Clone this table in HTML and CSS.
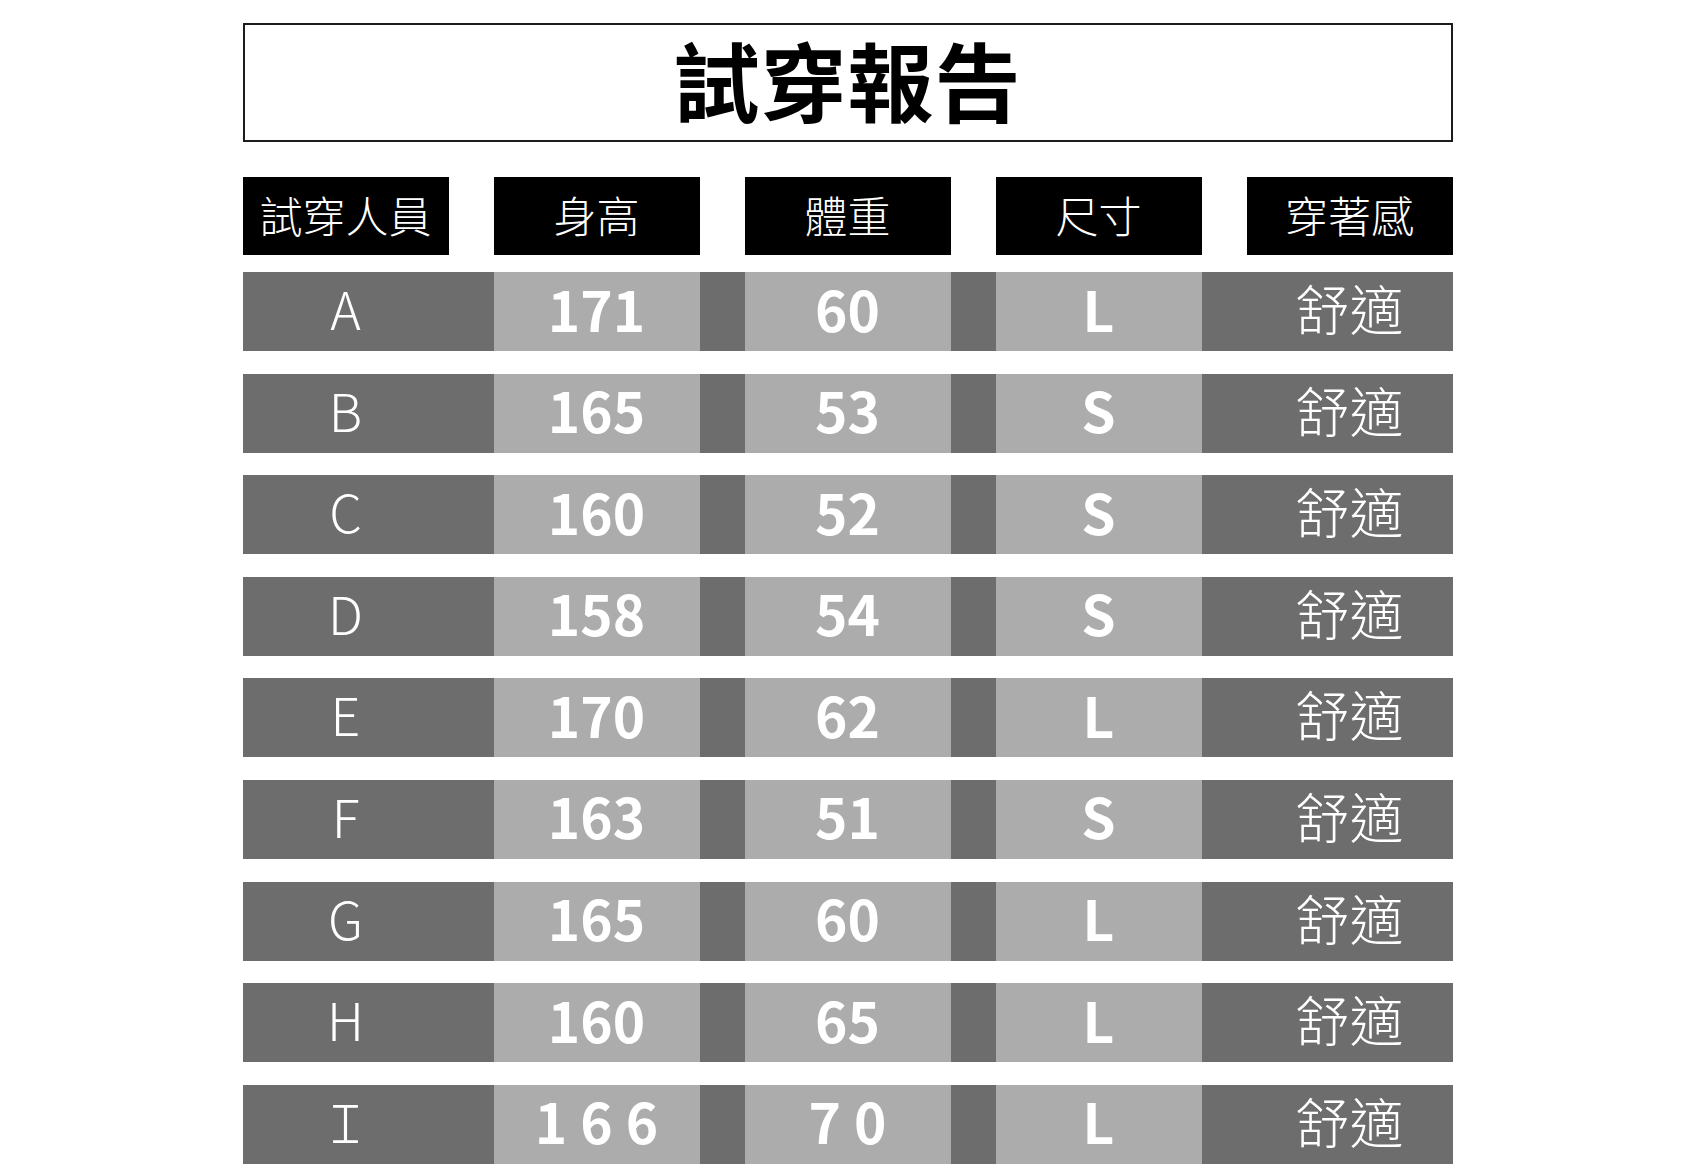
FILE: index.html
```html
<!DOCTYPE html>
<html lang="zh-Hant">
<head>
<meta charset="utf-8">
<title>試穿報告</title>
<link rel="stylesheet" href="styles.css">
</head>
<body>
<div class="page">
  <div class="title-box"><h1 class="title">試穿報告</h1></div>
  <div class="head">
    <div class="hcell">試穿人員</div>
    <div class="hcell">身高</div>
    <div class="hcell">體重</div>
    <div class="hcell">尺寸</div>
    <div class="hcell">穿著感</div>
  </div>
  <div class="rows">
    <div class="row"><div class="c name">A</div><div class="c num">171</div><div class="c num">60</div><div class="c num">L</div><div class="c feel">舒適</div></div>
    <div class="row"><div class="c name">B</div><div class="c num">165</div><div class="c num">53</div><div class="c num">S</div><div class="c feel">舒適</div></div>
    <div class="row"><div class="c name">C</div><div class="c num">160</div><div class="c num">52</div><div class="c num">S</div><div class="c feel">舒適</div></div>
    <div class="row"><div class="c name">D</div><div class="c num">158</div><div class="c num">54</div><div class="c num">S</div><div class="c feel">舒適</div></div>
    <div class="row"><div class="c name">E</div><div class="c num">170</div><div class="c num">62</div><div class="c num">L</div><div class="c feel">舒適</div></div>
    <div class="row"><div class="c name">F</div><div class="c num">163</div><div class="c num">51</div><div class="c num">S</div><div class="c feel">舒適</div></div>
    <div class="row"><div class="c name">G</div><div class="c num">165</div><div class="c num">60</div><div class="c num">L</div><div class="c feel">舒適</div></div>
    <div class="row"><div class="c name">H</div><div class="c num">160</div><div class="c num">65</div><div class="c num">L</div><div class="c feel">舒適</div></div>
    <div class="row"><div class="c name">Ｉ</div><div class="c num wide">166</div><div class="c num wide">70</div><div class="c num">L</div><div class="c feel">舒適</div></div>
  </div>
</div>
</body>
</html>
```
FILE: styles.css
```css
html, body {
  margin: 0;
  padding: 0;
  background: #ffffff;
}
body {
  font-family: "Noto Sans CJK TC", "Noto Sans CJK SC", "Noto Sans", sans-serif;
  color: #ffffff;
}
.page {
  width: 1210px;
  margin: 0 auto;
  padding-top: 23px;
}
.title-box {
  box-sizing: border-box;
  height: 119px;
  border: 2px solid #1c1c1c;
  display: flex;
  align-items: center;
  justify-content: center;
  padding-bottom: 7px;
}
.title {
  margin: 0;
  font-size: 86px;
  font-weight: 700;
  color: #000000;
  line-height: 1;
  letter-spacing: 1px;
}
.head {
  margin-top: 35px;
  display: grid;
  grid-template-columns: repeat(5, 206px);
  column-gap: 45px;
}
.hcell {
  box-sizing: border-box;
  height: 78px;
  background: #000000;
  display: flex;
  align-items: center;
  justify-content: center;
  font-size: 43px;
  font-weight: 300;
  line-height: 1;
  padding-bottom: 4px;
}
.rows {
  margin-top: 17px;
  display: grid;
  row-gap: 22.6px;
}
.row {
  height: 79px;
  background: #6d6d6d;
  display: grid;
  grid-template-columns: repeat(5, 206px);
  column-gap: 45px;
}
.c {
  box-sizing: border-box;
  display: flex;
  align-items: center;
  justify-content: center;
  line-height: 1;
  padding-bottom: 7px;
}
.name {
  font-size: 52px;
  font-weight: 300;
}
.num {
  background: #acacac;
  font-size: 55px;
  font-weight: 700;
}
.num.wide {
  letter-spacing: 13px;
  padding-left: 13px;
}
.feel {
  font-size: 54px;
  font-weight: 300;
}
```
